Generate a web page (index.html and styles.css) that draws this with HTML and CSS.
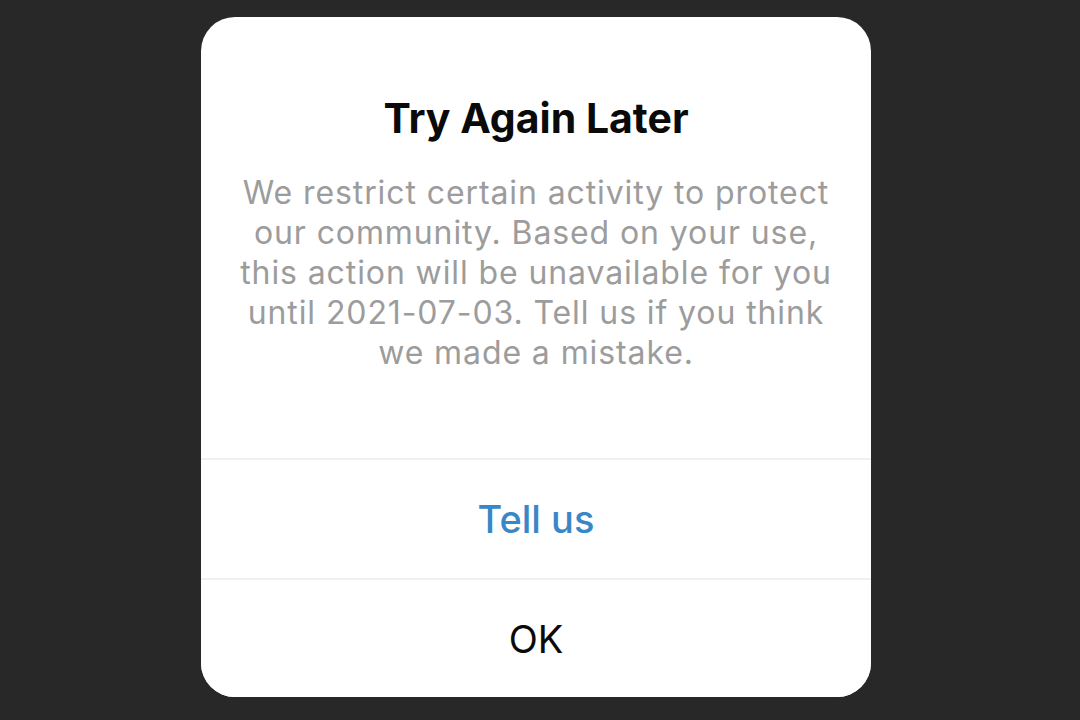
FILE: index.html
```html
<html>
	<head>
		<link rel="stylesheet" href="styles.css">
	</head>
	<body>
		<div class="dialog">
			<div class="dialog_body">
				<h1 class="title">Try Again Later</h1>
				<p class="message">We restrict certain activity to protect<br>our community. Based on your use,<br>this action will be unavailable for you<br>until 2021-07-03. Tell us if you think<br>we made a mistake.</p>
			</div>
			<button class="action tell">Tell us</button>
			<button class="action ok">OK</button>
		</div>
	</body>
</html>
```

FILE: styles.css
```css
* {
	margin: 0;
	padding: 0;
	box-sizing: border-box;
}

body {
	background: #282828;
	font-family: Inter, "Liberation Sans", Arial, sans-serif;
	height: 100vh;
	display: flex;
	justify-content: center;
	padding: 17px 8px 0 0;
}

.dialog {
	width: 670px;
	height: 680px;
	background: #fff;
	border-radius: 34px;
	display: flex;
	flex-direction: column;
	overflow: hidden;
}

.dialog_body {
	height: 441px;
	padding-top: 78px;
	text-align: center;
}

.title {
	font-size: 41px;
	line-height: 46px;
	font-weight: 700;
	color: #0a0a0a;
}

.message {
	margin-top: 32px;
	font-size: 32px;
	line-height: 40px;
	font-weight: 400;
	color: #9c9c9c;
	letter-spacing: 0.9px;
}

.action {
	height: 120px;
	border: none;
	border-top: 2px solid #f0f0f0;
	background: #fff;
	font-family: inherit;
	font-size: 38px;
	cursor: pointer;
}

.action.tell {
	color: #3a87c7;
	font-weight: 500;
}

.action.ok {
	height: 119px;
	color: #0a0a0a;
}
```
